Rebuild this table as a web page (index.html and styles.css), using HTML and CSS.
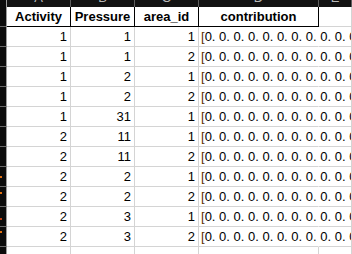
FILE: index.html
```html
<!DOCTYPE html>
<html>
<head>
<meta charset="utf-8">
<link rel="stylesheet" href="styles.css">
</head>
<body>
<div class="sheet">
  <div class="row colhdr">
    <div class="rh"></div>
    <div class="cl"><span>A</span></div>
    <div class="cl"><span>B</span></div>
    <div class="cl"><span>C</span></div>
    <div class="cl"><span>D</span></div>
    <div class="cl last"><span>E</span></div>
  </div>
  <div class="row head">
    <div class="rh"></div>
    <div class="c">Activity</div>
    <div class="c">Pressure</div>
    <div class="c">area_id</div>
    <div class="c">contribution</div>
    <div class="c e"></div>
  </div>
  <div class="row data"><div class="rh"></div><div class="c n">1</div><div class="c n">1</div><div class="c n">1</div><div class="c t"><span class="br">[</span>0. 0. 0. 0. 0. 0. 0. 0. 0. 0. 0. 0.</div><div class="c e"></div></div>
  <div class="row data"><div class="rh"></div><div class="c n">1</div><div class="c n">1</div><div class="c n">2</div><div class="c t"><span class="br">[</span>0. 0. 0. 0. 0. 0. 0. 0. 0. 0. 0. 0.</div><div class="c e"></div></div>
  <div class="row data"><div class="rh"></div><div class="c n">1</div><div class="c n">2</div><div class="c n">1</div><div class="c t"><span class="br">[</span>0. 0. 0. 0. 0. 0. 0. 0. 0. 0. 0. 0.</div><div class="c e"></div></div>
  <div class="row data"><div class="rh"></div><div class="c n">1</div><div class="c n">2</div><div class="c n">2</div><div class="c t"><span class="br">[</span>0. 0. 0. 0. 0. 0. 0. 0. 0. 0. 0. 0.</div><div class="c e"></div></div>
  <div class="row data"><div class="rh"></div><div class="c n">1</div><div class="c n">31</div><div class="c n">1</div><div class="c t"><span class="br">[</span>0. 0. 0. 0. 0. 0. 0. 0. 0. 0. 0. 0.</div><div class="c e"></div></div>
  <div class="row data"><div class="rh"></div><div class="c n">2</div><div class="c n">11</div><div class="c n">1</div><div class="c t"><span class="br">[</span>0. 0. 0. 0. 0. 0. 0. 0. 0. 0. 0. 0.</div><div class="c e"></div></div>
  <div class="row data"><div class="rh"></div><div class="c n">2</div><div class="c n">11</div><div class="c n">2</div><div class="c t"><span class="br">[</span>0. 0. 0. 0. 0. 0. 0. 0. 0. 0. 0. 0.</div><div class="c e"></div></div>
  <div class="row data"><div class="rh"><i class="mk m1"></i></div><div class="c n">2</div><div class="c n">2</div><div class="c n">1</div><div class="c t"><span class="br">[</span>0. 0. 0. 0. 0. 0. 0. 0. 0. 0. 0. 0.</div><div class="c e"></div></div>
  <div class="row data"><div class="rh"><i class="mk m2"></i></div><div class="c n">2</div><div class="c n">2</div><div class="c n">2</div><div class="c t"><span class="br">[</span>0. 0. 0. 0. 0. 0. 0. 0. 0. 0. 0. 0.</div><div class="c e"></div></div>
  <div class="row data"><div class="rh"><i class="mk m3"></i></div><div class="c n">2</div><div class="c n">3</div><div class="c n">1</div><div class="c t"><span class="br">[</span>0. 0. 0. 0. 0. 0. 0. 0. 0. 0. 0. 0.</div><div class="c e"></div></div>
  <div class="row data"><div class="rh"><i class="mk m4"></i></div><div class="c n">2</div><div class="c n">3</div><div class="c n">2</div><div class="c t"><span class="br">[</span>0. 0. 0. 0. 0. 0. 0. 0. 0. 0. 0. 0.</div><div class="c e"></div></div>
  <div class="row empty"><div class="rh"></div><div class="c"></div><div class="c"></div><div class="c"></div><div class="c"></div><div class="c e"></div></div>
</div>
</body>
</html>
```

FILE: styles.css
```css
html, body {
  margin: 0;
  padding: 0;
  background: #ffffff;
  overflow: hidden;
}
body {
  width: 352px;
  height: 254px;
  font-family: "Liberation Sans", Arial, sans-serif;
  font-size: 13px;
  color: #000;
}
.sheet {
  display: flex;
  flex-direction: column;
  width: 352px;
  height: 254px;
  overflow: hidden;
}
.row {
  display: grid;
  grid-template-columns: 7px 64px 64px 64px 120px 1fr;
  height: 20px;
  flex: none;
}
.row > div {
  box-sizing: border-box;
  border-right: 1px solid #d4d4d4;
  border-bottom: 1px solid #d4d4d4;
  line-height: 19px;
  white-space: nowrap;
}
.row .rh {
  background: #0c0c0c;
  border-right: 1px solid #9c9c9c;
  border-bottom: 1px solid #6a6a6a;
  position: relative;
}
.colhdr {
  height: 7px;
}
.colhdr > div {
  background: #121212;
  border-right: 1px solid #5e5e5e;
  border-bottom: 0;
  overflow: hidden;
  display: flex;
  justify-content: center;
  align-items: flex-end;
}
.colhdr .rh {
  border-bottom: 0;
}
.colhdr .cl span {
  line-height: 13px;
  margin-bottom: 3px;
  color: #b8b8b8;
  font-size: 13px;
}
.head .c {
  font-weight: bold;
  text-align: center;
  border-right: 1px solid #000;
  border-bottom: 1px solid #000;
}
.head .e {
  border-right: 1px solid #d4d4d4;
  border-bottom: 1px solid #d4d4d4;
}
.n {
  text-align: right;
  padding-right: 3px;
}
.t {
  padding-left: 2px;
  overflow: visible;
  border-right-color: transparent !important;
}
.br {
  color: #5a3000;
}
.mk {
  position: absolute;
  left: 0;
  width: 2px;
  height: 2px;
  background: #e07010;
}
.m1 { top: 9px; }
.m2 { top: 5px; }
.m3 { top: 11px; background: #c04010; }
.m4 { top: 4px; }
```
